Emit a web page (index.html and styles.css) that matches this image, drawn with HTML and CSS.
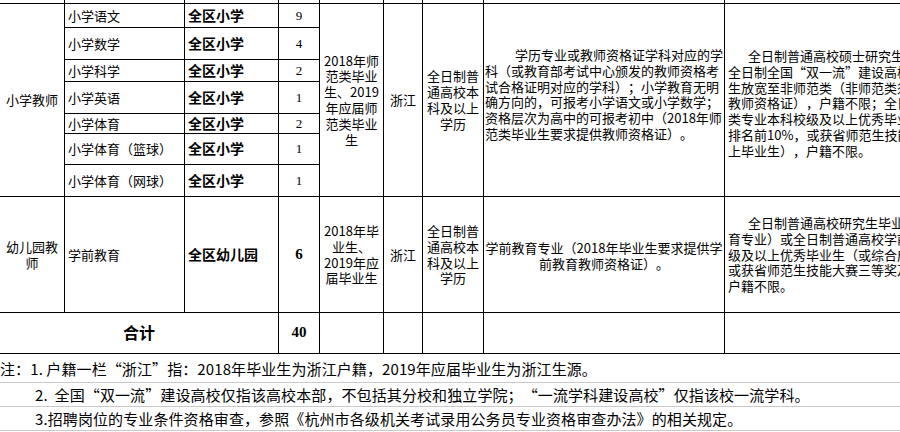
FILE: index.html
```html
<!DOCTYPE html>
<html lang="zh-CN">
<head>
<meta charset="utf-8">
<title>招聘岗位表</title>
<link rel="stylesheet" href="styles.css">
</head>
<body>
<div class="page">
  <div class="grid">
    <div class="c"></div><div class="c"></div><div class="c"></div><div class="c"></div><div class="c"></div><div class="c"></div><div class="c"></div><div class="c"></div><div class="c"></div>

    <div class="c mid span7">小学教师</div>
    <div class="c left">小学语文</div>
    <div class="c left bold">全区小学</div>
    <div class="c mid num">9</div>
    <div class="c mid span7 lines">2018年师<br>范类毕业<br>生、2019<br>年应届师<br>范类毕业<br>生</div>
    <div class="c mid span7">浙江</div>
    <div class="c mid span7 lines">全日制普<br>通高校本<br>科及以上<br>学历</div>
    <div class="c span7 para p1">学历专业或教师资格证学科对应的学<br>科（或教育部考试中心颁发的教师资格考<br>试合格证明对应的学科）；小学教育无明<br>确方向的，可报考小学语文或小学数学；<br>资格层次为高中的可报考初中（2018年师<br>范类毕业生要求提供教师资格证）。</div>
    <div class="c span7 para p2">全日制普通高校硕士研究生及以上学历；<br>全日制全国“双一流”建设高校本科毕业<br>生放宽至非师范类（非师范类须具有相应<br>教师资格证），户籍不限；全日制师范<br>类专业本科校级及以上优秀毕业生（或综合<br>排名前10%，或获省师范生技能大赛三等奖及以<br>上毕业生），户籍不限。</div>

    <div class="c left">小学数学</div>
    <div class="c left bold">全区小学</div>
    <div class="c mid num">4</div>

    <div class="c left">小学科学</div>
    <div class="c left bold">全区小学</div>
    <div class="c mid num">2</div>

    <div class="c left">小学英语</div>
    <div class="c left bold">全区小学</div>
    <div class="c mid num">1</div>

    <div class="c left">小学体育</div>
    <div class="c left bold">全区小学</div>
    <div class="c mid num">2</div>

    <div class="c left">小学体育（篮球）</div>
    <div class="c left bold">全区小学</div>
    <div class="c mid num">1</div>

    <div class="c left">小学体育（网球）</div>
    <div class="c left bold">全区小学</div>
    <div class="c mid num">1</div>

    <div class="c mid lines">幼儿园教<br>师</div>
    <div class="c left">学前教育</div>
    <div class="c left bold">全区幼儿园</div>
    <div class="c mid numbold">6</div>
    <div class="c mid lines">2018年毕<br>业生、<br>2019年应<br>届毕业生</div>
    <div class="c mid">浙江</div>
    <div class="c mid lines">全日制普<br>通高校本<br>科及以上<br>学历</div>
    <div class="c para center">学前教育专业（2018年毕业生要求提供学<br>前教育教师资格证）。</div>
    <div class="c para p2">全日制普通高校研究生毕业生（学前教<br>育专业）或全日制普通高校学前教育专业本科校<br>级及以上优秀毕业生（或综合成绩排名前10%，<br>或获省师范生技能大赛三等奖及以上毕业生），<br>户籍不限。</div>

    <div class="c mid span3 total">合计</div>
    <div class="c mid numbold">40</div>
    <div class="c"></div><div class="c"></div><div class="c"></div><div class="c"></div><div class="c"></div>
  </div>

  <div class="notes">
    <div class="note n1">注：1.&nbsp;户籍一栏“浙江”指：2018年毕业生为浙江户籍，2019年应届毕业生为浙江生源。</div>
    <div class="note n2">2.&nbsp;&nbsp;全国“双一流”建设高校仅指该高校本部，不包括其分校和独立学院；“一流学科建设高校”仅指该校一流学科。</div>
    <div class="note n3">3.招聘岗位的专业条件资格审查，参照《杭州市各级机关考试录用公务员专业资格审查办法》的相关规定。</div>
  </div>
</div>
</body>
</html>
```

FILE: styles.css
```css
html, body {
  margin: 0;
  padding: 0;
  background: #fff;
  overflow: hidden;
}

.page {
  width: 900px;
  height: 432px;
  overflow: hidden;
  font-family: "Noto Sans CJK SC", "Noto Sans", sans-serif;
  color: #000;
  font-size: 13px;
  text-spacing-trim: space-all;
}

.grid {
  display: grid;
  width: 975px;
  grid-template-columns: 64px 119px 93px 40px 63px 38px 60px 240px 250px;
  grid-template-rows: 3px 23px 31px 21px 31px 19px 30px 31px 115px 40px;
  gap: 1px;
  padding-bottom: 1px;
  background: #000;
}

.c {
  background: #fff;
  display: flex;
  align-items: center;
  overflow: hidden;
  white-space: nowrap;
  line-height: 15.8px;
}

.span7 { grid-row: span 7; }
.span3 { grid-column: span 3; }

.mid {
  justify-content: center;
  text-align: center;
}

.left {
  padding-left: 3px;
}

.bold {
  font-weight: 700;
  font-size: 14px;
}

.num {
  font-family: "Liberation Serif", serif;
  font-size: 13px;
}

.numbold {
  font-family: "Liberation Serif", serif;
  font-weight: 700;
  font-size: 15px;
}

.para {
  display: block;
  height: 100%;
  box-sizing: border-box;
}

.p1 {
  padding: 43px 0 0 1px;
  text-indent: 30px;
}

.p2 {
  padding-left: 3px;
  text-indent: 20px;
}

.span7.p2 {
  padding-top: 44px;
}

.c.p2:not(.span7) {
  padding-top: 18px;
}

.center {
  display: flex;
  align-items: center;
  justify-content: center;
  text-align: center;
  padding-top: 2px;
}

.total {
  font-size: 16px;
  font-weight: 700;
}

.notes {
  font-size: 15px;
  letter-spacing: 0.1px;
  color: #000;
}

.note {
  display: flex;
  align-items: center;
  border-bottom: 1px solid #c9c9c9;
  white-space: nowrap;
  box-sizing: border-box;
}

.n1 { height: 29px; }
.n2 { height: 24px; padding-left: 35px; }
.n3 { height: 24px; padding-left: 35px; }
```
